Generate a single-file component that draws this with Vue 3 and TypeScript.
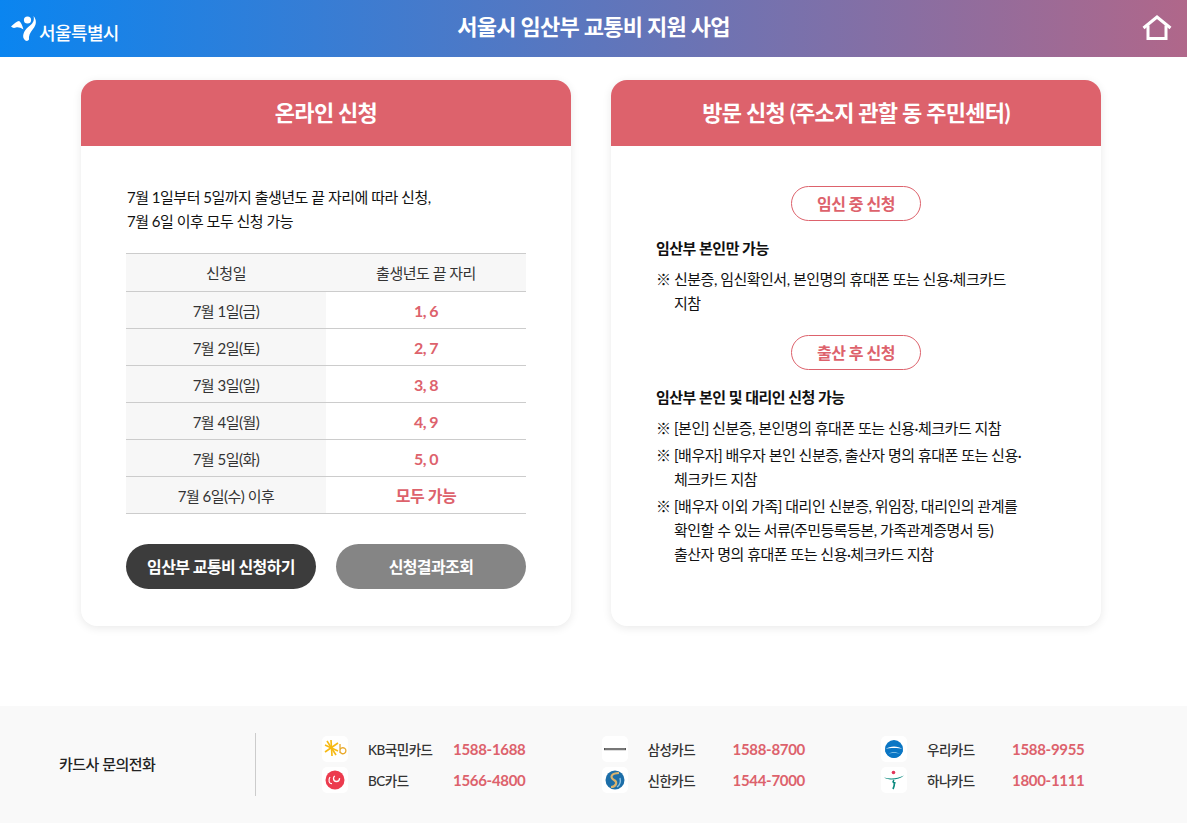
<script setup lang="ts">
interface Row { day: string; digits: string }
interface Card { name: string; phone: string; logo: string }

const rows: Row[] = [
  { day: '7월 1일(금)', digits: '1, 6' },
  { day: '7월 2일(토)', digits: '2, 7' },
  { day: '7월 3일(일)', digits: '3, 8' },
  { day: '7월 4일(월)', digits: '4, 9' },
  { day: '7월 5일(화)', digits: '5, 0' },
  { day: '7월 6일(수) 이후', digits: '모두 가능' },
]
const cards: Card[] = [
  { name: 'KB국민카드', phone: '1588-1688', logo: 'kb' },
  { name: '삼성카드', phone: '1588-8700', logo: 'samsung' },
  { name: '우리카드', phone: '1588-9955', logo: 'woori' },
  { name: 'BC카드', phone: '1566-4800', logo: 'bc' },
  { name: '신한카드', phone: '1544-7000', logo: 'shinhan' },
  { name: '하나카드', phone: '1800-1111', logo: 'hana' },
]
</script>

<template>
  <div class="page">
    <header class="top">
      <div class="brand">
        <svg class="seoul" viewBox="0 0 30 30" width="30" height="30">
          <circle cx="17.5" cy="7" r="3.6" fill="#fff" />
          <path d="M1 13.5 C4 10.5 7 8 9 8 C11 9 12.5 13 13.5 16.5 C10.5 14.5 8 14 6 14.5 C4 15.2 2.5 15 1 13.5Z" fill="#fff" />
          <path d="M14 26 C11.5 22 15 16 20 12.5 C23.5 10 24.5 6.5 23.5 3 C27 7 26.5 12 23 16 C20 19.5 18.5 23 19 26.5 C18 28.5 15.500 28.500 14 26Z" fill="#fff" />
        </svg>
        <span class="brand-name">서울특별시</span>
      </div>
      <h1 class="title">서울시 임산부 교통비 지원 사업</h1>
      <svg class="home" viewBox="0 0 30 26" width="30" height="26" fill="none" stroke="#fff" stroke-width="3">
        <path d="M1.500 13 L15 2 L28.500 13" />
        <path d="M6 10.500 V23.500 H24 V10.500" />
      </svg>
    </header>

    <main class="cards">
      <section class="panel">
        <h2 class="panel-head">온라인 신청</h2>
        <div class="panel-body left-body">
          <p class="lead">7월 1일부터 5일까지 출생년도 끝 자리에 따라 신청,<br />7월 6일 이후 모두 신청 가능</p>
          <table class="sched">
            <thead>
              <tr><th>신청일</th><th>출생년도 끝 자리</th></tr>
            </thead>
            <tbody>
              <tr v-for="r in rows" :key="r.day">
                <td class="day">{{ r.day }}</td>
                <td class="digits">{{ r.digits }}</td>
              </tr>
            </tbody>
          </table>
          <div class="actions">
            <a class="btn dark">임산부 교통비 신청하기</a>
            <a class="btn gray">신청결과조회</a>
          </div>
        </div>
      </section>

      <section class="panel">
        <h2 class="panel-head">방문 신청 (주소지 관할 동 주민센터)</h2>
        <div class="panel-body right-body">
          <div class="pill">임신 중 신청</div>
          <h3 class="sub">임산부 본인만 가능</h3>
          <ul class="notes">
            <li>신분증, 임신확인서, 본인명의 휴대폰 또는 신용·체크카드<br />지참</li>
          </ul>
          <div class="pill second">출산 후 신청</div>
          <h3 class="sub">임산부 본인 및 대리인 신청 가능</h3>
          <ul class="notes">
            <li>[본인] 신분증, 본인명의 휴대폰 또는 신용·체크카드 지참</li>
            <li>[배우자] 배우자 본인 신분증, 출산자 명의 휴대폰 또는 신용·<br />체크카드 지참</li>
            <li>[배우자 이외 가족] 대리인 신분증, 위임장, 대리인의 관계를<br />확인할 수 있는 서류(주민등록등본, 가족관계증명서 등)<br />출산자 명의 휴대폰 또는 신용·체크카드 지참</li>
          </ul>
        </div>
      </section>
    </main>

    <footer class="foot">
      <div class="foot-label">카드사 문의전화</div>
      <div class="foot-grid">
        <div v-for="c in cards" :key="c.name" class="entry">
          <span class="logo">
            <svg v-if="c.logo === 'kb'" viewBox="0 0 26 26" width="26" height="26">
              <g stroke="#f6b913" stroke-width="1.600" fill="none">
                <path d="M9 4 L10 20" /><path d="M3 9 L16 15" /><path d="M16 7 L3 16" /><path d="M5 5 L14 19" />
              </g>
              <path d="M18 8 V17 M18 14 A3 3 0 1 1 18 15.500" stroke="#e9a92b" stroke-width="1.300" fill="none" />
            </svg>
            <svg v-else-if="c.logo === 'bc'" viewBox="0 0 26 26" width="26" height="26">
              <circle cx="13" cy="13" r="9.500" fill="#ec3b4e" />
              <circle cx="14.500" cy="11.500" r="3" fill="none" stroke="#fff" stroke-width="1.300" stroke-dasharray="12 6" />
              <path d="M8 10 C6 13 7 17 10 16.500" stroke="#fff" stroke-width="1.200" fill="none" />
            </svg>
            <svg v-else-if="c.logo === 'samsung'" viewBox="0 0 26 26" width="26" height="26">
              <rect x="2" y="12" width="22" height="2.200" fill="#555" />
              <rect x="3" y="12.600" width="20" height="0.800" fill="#aaa" />
            </svg>
            <svg v-else-if="c.logo === 'shinhan'" viewBox="0 0 26 26" width="26" height="26">
              <circle cx="13" cy="13" r="9.500" fill="#1c6ea8" />
              <path d="M17 6 C10 6 7 10 12 13 C16 15 14 20 9 20" stroke="#d9b26d" stroke-width="2.200" fill="none" />
              <path d="M18 11 C19 15 18 18 15 20" stroke="#8fc3e3" stroke-width="1.400" fill="none" />
            </svg>
            <svg v-else-if="c.logo === 'woori'" viewBox="0 0 26 26" width="26" height="26">
              <circle cx="13" cy="13" r="9" fill="#0a76c4" />
              <path d="M4 14.500 C8 11.500 18 11.500 22 14.500 C21 19 17 22 13 22 C9 22 5 19 4 14.500Z" fill="#0a76c4" />
              <path d="M4.500 13 C9 9.500 17 9.500 21.500 13 C18 11.800 8 11.800 4.500 13Z" fill="#fff" />
              <path d="M7 18 C10 15.500 16 15.500 19 18 C17 16.800 9 16.800 7 18Z" fill="#9fd3f0" />
            </svg>
            <svg v-else viewBox="0 0 26 26" width="26" height="26">
              <circle cx="12.500" cy="5.500" r="1.800" fill="#e2355a" />
              <path d="M3 10.500 C9 12 16 12 23 8.500 C18 13 9 14 3 10.500Z" fill="#0a8a7f" />
              <path d="M13 13 C11 15 13 17 14.500 15.500 M13.500 15 C13.500 18 13 20 12 22" stroke="#0a8a7f" stroke-width="1.700" fill="none" />
            </svg>
          </span>
          <span class="card-name">{{ c.name }}</span>
          <span class="phone">{{ c.phone }}</span>
        </div>
      </div>
    </footer>
  </div>
</template>

<style>
html, body { margin: 0; background: #fff; }
</style>

<style scoped>
.page {
  width: 1187px;
  height: 823px;
  overflow: hidden;
  display: flex;
  flex-direction: column;
  font-family: Lato, "Noto Sans CJK KR", sans-serif;
  color: #222;
  letter-spacing: -0.5px;
}
.top {
  height: 57px;
  flex: none;
  position: relative;
  display: flex;
  align-items: center;
  justify-content: center;
  background: linear-gradient(90deg, #0a85f0 0%, #b0678a 100%);
  color: #fff;
}
.brand {
  position: absolute;
  left: 10px;
  top: 9px;
  display: flex;
  align-items: center;
}
.seoul { margin-right: 0; }
.brand-name {
  font-size: 18px;
  font-weight: 500;
  line-height: 26px;
  margin-top: 11px;
  margin-left: -1px;
  height: 26px;
  letter-spacing: -0.6px;
}
.title {
  margin: 0;
  font-size: 22px;
  font-weight: 700;
  line-height: 30px;
  margin-bottom: 4px;
  letter-spacing: -0.7px;
}
.home { position: absolute; left: 1142px; top: 15px; }
.cards {
  display: flex;
  gap: 40px;
  padding: 23px 86px 0 81px;
}
.panel {
  width: 490px;
  height: 546px;
  flex: none;
  border-radius: 16px;
  background: #fff;
  box-shadow: 0 2px 10px rgba(0, 0, 0, 0.09);
  overflow: hidden;
  display: flex;
  flex-direction: column;
}
.panel-head {
  margin: 0;
  height: 66px;
  flex: none;
  background: #dd626c;
  color: #fff;
  text-align: center;
  font-size: 22px;
  font-weight: 700;
  line-height: 66px;
  letter-spacing: -0.7px;
}
.left-body { padding: 39px 45px 0; }
.right-body { padding: 40px 45px 0; }
.lead {
  margin: 0 0 20px;
  padding-left: 1px;
  font-size: 15px;
  line-height: 24px;
  font-weight: 400;
  color: #111;
}
.sched {
  width: 400px;
  border-collapse: collapse;
  table-layout: fixed;
  border-top: 1px solid #ccc;
  font-size: 15px;
}
.sched th {
  height: 37px;
  padding: 0;
  background: #f7f7f7;
  border-bottom: 1px solid #ccc;
  font-weight: 400;
  color: #333;
}
.sched td {
  height: 36px;
  padding: 0;
  border-bottom: 1px solid #ccc;
  text-align: center;
}
.day { background: #f7f7f7; color: #333; }
.digits { color: #dd626c; font-weight: 700; font-size: 16px; }
.actions {
  display: flex;
  justify-content: space-between;
  margin-top: 30px;
}
.btn {
  width: 190px;
  height: 45px;
  border-radius: 23px;
  color: #fff;
  text-align: center;
  font-size: 16px;
  font-weight: 700;
  line-height: 45px;
  letter-spacing: -0.6px;
}
.dark { background: #3c3c3c; }
.gray { background: #858585; }
.pill {
  width: 128px;
  height: 33px;
  margin: 0 auto;
  border: 1px solid #dd626c;
  border-radius: 18px;
  color: #dd626c;
  text-align: center;
  font-size: 16px;
  font-weight: 700;
  line-height: 33px;
}
.pill.second { margin-top: 20px; }
.sub {
  margin: 16px 0 0;
  font-size: 15px;
  font-weight: 700;
  line-height: 22px;
  color: #111;
}
.notes {
  margin: 8px 0 0;
  padding: 0;
  list-style: none;
  font-size: 15px;
  line-height: 24px;
  color: #111;
}
.notes li {
  position: relative;
  padding-left: 18px;
  margin-top: 3px;
}
.notes li::before {
  content: "※";
  position: absolute;
  left: 0;
  top: 0;
}
.foot {
  margin-top: 80px;
  flex: 1;
  background: #f9f9f9;
  display: flex;
  align-items: center;
  padding-left: 59px;
}
.foot-label {
  width: 196px;
  height: 63px;
  line-height: 63px;
  border-right: 1px solid #ccc;
  font-size: 15px;
  font-weight: 500;
  flex: none;
}
.foot-grid {
  display: grid;
  grid-template-columns: repeat(3, 279.5px);
  row-gap: 5px;
  margin-left: 66px;
}
.entry { display: flex; align-items: center; height: 26px; }
.logo {
  width: 26px;
  height: 26px;
  border-radius: 5px;
  background: #fff;
  flex: none;
  display: flex;
}
.card-name {
  width: 85px;
  margin-left: 20px;
  font-size: 13.500px;
  font-weight: 500;
  color: #333;
}
.phone {
  font-size: 15px;
  font-weight: 700;
  color: #dd626c;
  letter-spacing: -0.3px;
}
</style>
